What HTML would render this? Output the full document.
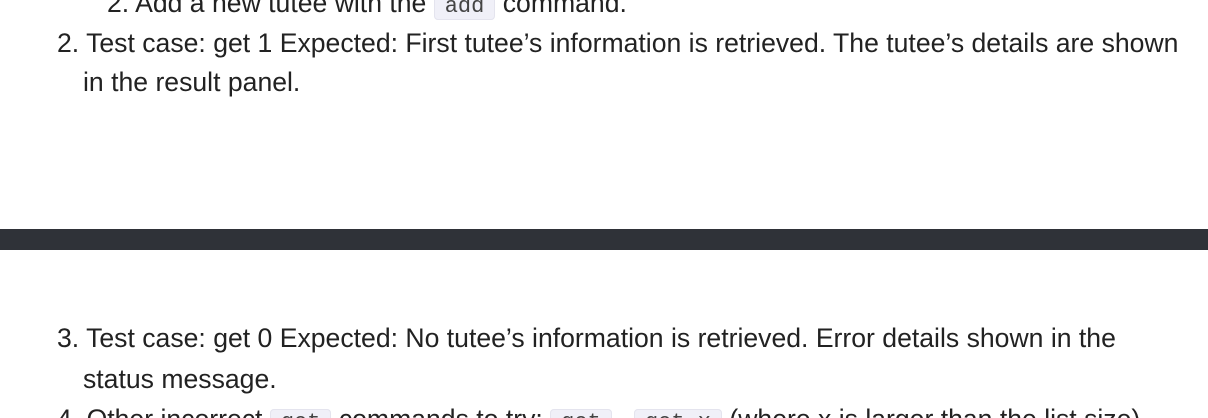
<!DOCTYPE html>
<html><head><meta charset="utf-8"><style>
html,body{margin:0;padding:0;background:#fff;width:1208px;height:418px;overflow:hidden;position:relative}
.l{position:absolute;white-space:nowrap;font-family:"Liberation Sans",sans-serif;font-size:26.6px;color:#222;line-height:30px;transform-origin:0 50%}
code{font-family:"Liberation Mono",monospace;font-size:22px;background:#f0f0f8;border:1px solid #e4e4ee;border-radius:4px;padding:0 10px;color:#444}
.bar{position:absolute;left:0;top:229px;width:1208px;height:21px;background:#2f3238}
</style></head><body>
<div class="l" style="left:107px;top:-12px">2. Add a new tutee with the <code>add</code> command.</div>
<div class="l" style="left:57px;top:28px">2. Test case: get 1 Expected: First tutee’s information is retrieved. The tutee’s details are shown</div>
<div class="l" style="left:83px;top:67px">in the result panel.</div>
<div class="bar"></div>
<div class="l" style="left:57px;top:323px">3. Test case: get 0 Expected: No tutee’s information is retrieved. Error details shown in the</div>
<div class="l" style="left:83px;top:364px">status message.</div>
<div class="l" style="left:57px;top:404px">4. Other incorrect <code>get</code> commands to try: <code>get</code> , <code>get x</code> (where x is larger than the list size)</div>
</body></html>
